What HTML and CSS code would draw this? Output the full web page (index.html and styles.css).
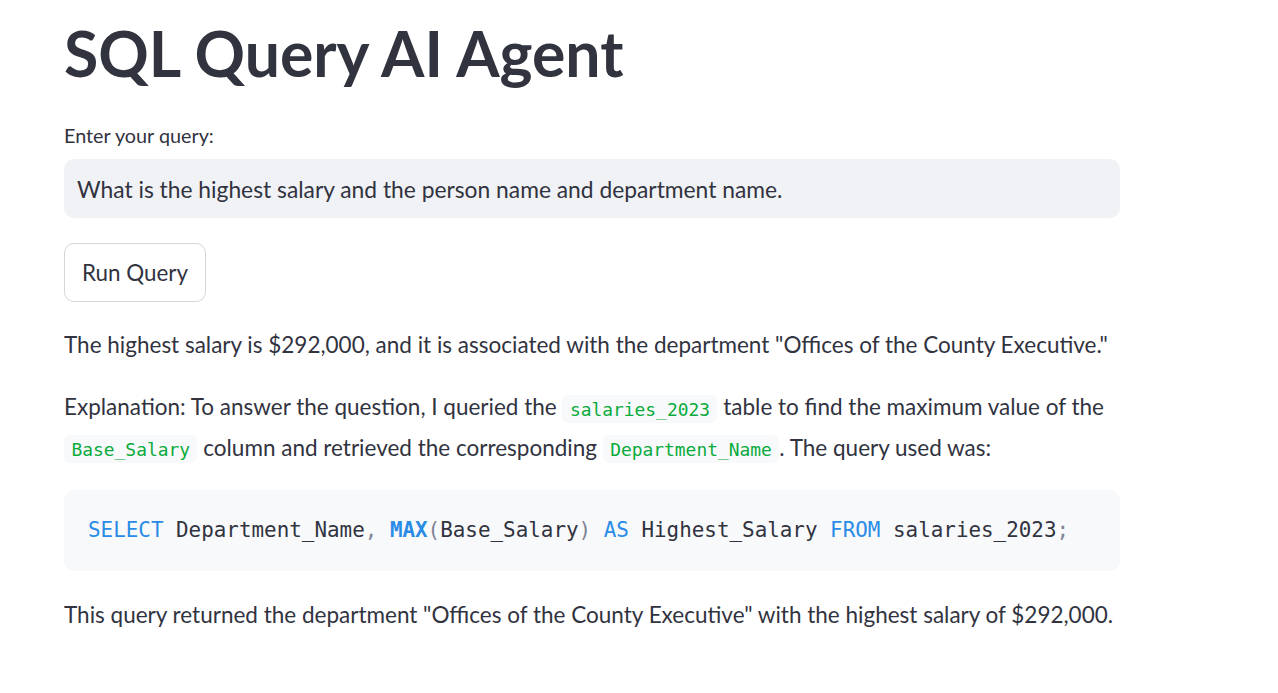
FILE: index.html
```html
<!DOCTYPE html>
<html>
<head>
<meta charset="utf-8">
<title>SQL Query AI Agent</title>
<link rel="stylesheet" href="styles.css">
</head>
<body>
<main class="main">
  <h1 class="title">SQL Query AI Agent</h1>
  <label class="label" for="q">Enter your query:</label>
  <div class="input-box"><input id="q" class="input" type="text" value="What is the highest salary and the person name and department name."></div>
  <div class="btn-row"><button class="btn">Run Query</button></div>
  <p class="para p1">The highest salary is $292,000, and it is associated with the department "Offices of the County Executive."</p>
  <p class="para p2">Explanation: To answer the question, I queried the <code class="ic">salaries_2023</code> table to find the maximum value of the <code class="ic">Base_Salary</code> column and retrieved the corresponding <code class="ic">Department_Name</code>. The query used was:</p>
  <div class="code"><pre class="code-pre"><code><span class="kw">SELECT</span> Department_Name<span class="pn">,</span> <span class="fn">MAX</span><span class="pn">(</span>Base_Salary<span class="pn">)</span> <span class="kw">AS</span> Highest_Salary <span class="kw">FROM</span> salaries_2023<span class="pn">;</span></code></pre></div>
  <p class="para p3">This query returned the department "Offices of the County Executive" with the highest salary of $292,000.</p>
</main>
</body>
</html>
```
FILE: styles.css
```css
html, body {
  margin: 0;
  padding: 0;
  background: #ffffff;
}
body {
  font-family: "Lato", "Noto Sans", sans-serif;
  color: #31333f;
}
.main {
  width: 1056px;
  margin-left: 64px;
  display: flex;
  flex-direction: column;
}
.title {
  font-size: 62.5px;
  font-weight: 700;
  line-height: 1;
  margin: 22px 0 0 0;
  height: 66px;
}
.label {
  font-size: 19.8px;
  margin-top: 36px;
  line-height: 22px;
}
.input-box {
  margin-top: 13px;
  height: 59px;
  background: #f0f2f6;
  border-radius: 10px;
  display: flex;
  align-items: center;
}
.input {
  border: none;
  background: transparent;
  font-family: inherit;
  font-size: 22.8px;
  color: #31333f;
  padding: 0 13px;
  width: 100%;
  outline: none;
}
.btn-row {
  margin-top: 25px;
  display: flex;
}
.btn {
  height: 59px;
  width: 142px;
  background: #ffffff;
  border: 1px solid #d6d6d9;
  border-radius: 10px;
  font-family: inherit;
  font-size: 22.4px;
  color: #31333f;
  padding: 0;
}
.para {
  font-size: 22.5px;
  line-height: 38.4px;
  margin: 0;
}
.p1 {
  margin-top: 24px;
}
.p2 {
  margin-top: 24px;
}
.ic {
  font-family: "DejaVu Sans Mono", "Liberation Mono", monospace;
  font-size: 17.9px;
  color: #09ab3b;
  background: #f8f9fb;
  border-radius: 6px;
  padding: 3.6px 7.5px;
}
.code {
  margin-top: 21px;
  height: 81px;
  background: #f8f9fb;
  border-radius: 10px;
  padding: 0 24px;
  display: flex;
  align-items: center;
}
.code-pre {
  margin: 0;
  font-family: "DejaVu Sans Mono", "Liberation Mono", monospace;
  font-size: 20.9px;
  line-height: 1;
  color: #31333f;
}
.kw {
  color: #2a8ce6;
}
.fn {
  color: #2a8ce6;
  font-weight: 700;
}
.pn {
  color: #808495;
}
.p3 {
  margin-top: 25px;
}
```
